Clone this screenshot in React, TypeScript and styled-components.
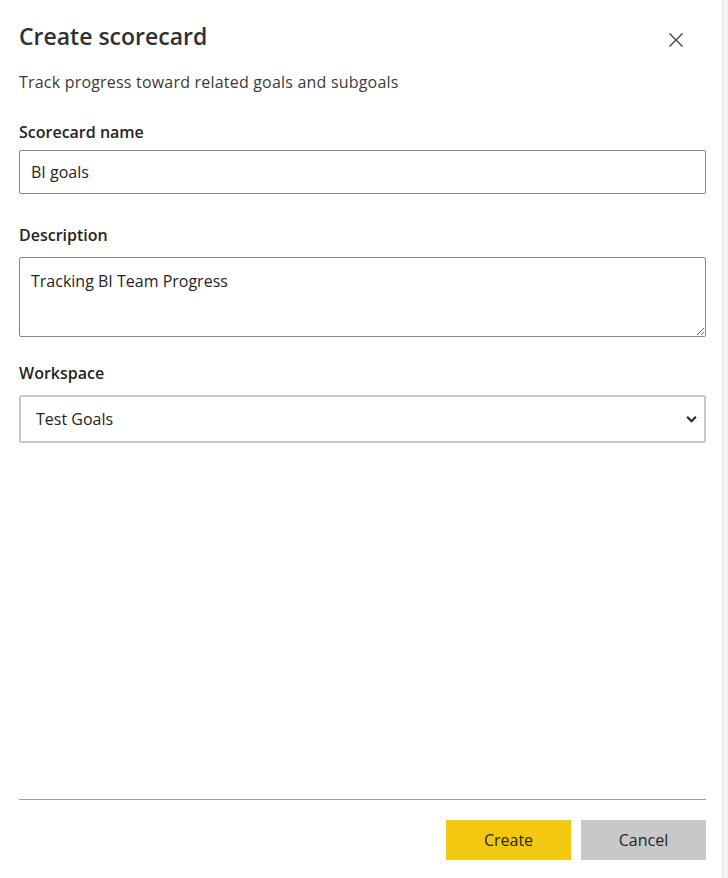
import React from "react";
import styled, { createGlobalStyle } from "styled-components";

const GlobalStyle = createGlobalStyle`
  html, body {
    margin: 0;
    padding: 0;
    background: #ffffff;
  }
  body {
    font-family: "Open Sans", "Liberation Sans", sans-serif;
    color: #252423;
  }
  * {
    box-sizing: border-box;
  }
`;

const Page = styled.div`
  display: flex;
  width: 728px;
  height: 878px;
`;

const Panel = styled.div`
  flex: 1;
  display: flex;
  flex-direction: column;
  padding: 20px 16px 18px 19px;
`;

const ScrollStrip = styled.div`
  width: 6px;
  background: #f3f3f3;
  border-left: 1px solid #e3e3e3;
`;

const Header = styled.div`
  display: flex;
  justify-content: space-between;
  align-items: flex-start;
`;

const Title = styled.h1`
  margin: 0;
  font-size: 23px;
  font-weight: 600;
  line-height: 32px;
  color: #323130;
`;

const CloseButton = styled.button`
  display: flex;
  align-items: center;
  justify-content: center;
  width: 32px;
  height: 32px;
  margin: 4px 14px 0 0;
  padding: 0;
  border: none;
  background: transparent;
  color: #444;
  cursor: pointer;
`;

const Subtitle = styled.p`
  margin: 15px 0 28px;
  font-size: 16px;
  line-height: 22px;
  letter-spacing: 0.2px;
  color: #3b3a39;
`;

const Field = styled.div<{ $top?: number }>`
  display: flex;
  flex-direction: column;
  margin-top: ${(p) => p.$top ?? 0}px;
`;

const Label = styled.label<{ $gap: number }>`
  font-size: 16px;
  font-weight: 600;
  line-height: 22px;
  margin-bottom: ${(p) => p.$gap}px;
  color: #252423;
`;

const TextInput = styled.input`
  width: 100%;
  height: 44px;
  padding: 0 11px;
  border: 1px solid #8a8886;
  border-radius: 2px;
  font-family: inherit;
  font-size: 16px;
  color: #252423;
  outline: none;
`;

const TextArea = styled.textarea`
  width: 100%;
  height: 80px;
  padding: 12px 11px;
  border: 1px solid #8a8886;
  border-radius: 2px;
  font-family: inherit;
  font-size: 16px;
  line-height: 22px;
  color: #252423;
  resize: vertical;
  outline: none;
`;

const SelectWrap = styled.div`
  position: relative;
`;

const Select = styled.select`
  display: block;
  width: 100%;
  height: 48px;
  padding: 0 40px 0 15px;
  border: 2px solid #c8c8c8;
  border-radius: 2px;
  background: #fff;
  font-family: inherit;
  font-size: 16px;
  color: #252423;
  appearance: none;
  outline: none;
`;

const Chevron = styled.span`
  position: absolute;
  right: 8px;
  top: 50%;
  transform: translateY(-50%);
  display: flex;
  pointer-events: none;
  color: #252423;
`;

const Spacer = styled.div`
  flex: 1;
`;

const Footer = styled.div`
  display: flex;
  flex-direction: column;
`;

const Divider = styled.hr`
  margin: 0 0 20px;
  border: none;
  border-top: 1px solid #a19f9d;
`;

const Actions = styled.div`
  display: flex;
  justify-content: flex-end;
  gap: 10px;
`;

const ActionButton = styled.button<{ $primary?: boolean }>`
  width: 125px;
  height: 40px;
  border: none;
  border-radius: 0;
  background: ${(p) => (p.$primary ? "#f2c811" : "#c8c8c8")};
  font-family: inherit;
  font-size: 16px;
  color: #252423;
  cursor: pointer;
`;

export default function App() {
  return (
    <>
      <GlobalStyle />
      <Page>
        <Panel>
          <Header>
            <Title>Create scorecard</Title>
            <CloseButton aria-label="Close">
              <svg width="16" height="16" viewBox="0 0 16 16">
                <path
                  d="M1.5 1.5 L14.5 14.5 M14.5 1.5 L1.5 14.5"
                  stroke="currentColor"
                  strokeWidth="1.4"
                  fill="none"
                />
              </svg>
            </CloseButton>
          </Header>
          <Subtitle>Track progress toward related goals and subgoals</Subtitle>
          <Field>
            <Label $gap={7}>Scorecard name</Label>
            <TextInput defaultValue="BI goals" />
          </Field>
          <Field $top={30}>
            <Label $gap={11}>Description</Label>
            <TextArea defaultValue="Tracking BI Team Progress" />
          </Field>
          <Field $top={25}>
            <Label $gap={11}>Workspace</Label>
            <SelectWrap>
              <Select defaultValue="test">
                <option value="test">Test Goals</option>
              </Select>
              <Chevron>
                <svg width="13" height="13" viewBox="0 0 12 12">
                  <path
                    d="M2 4 L6 8 L10 4"
                    stroke="currentColor"
                    strokeWidth="2"
                    fill="none"
                  />
                </svg>
              </Chevron>
            </SelectWrap>
          </Field>
          <Spacer />
          <Footer>
            <Divider />
            <Actions>
              <ActionButton $primary>Create</ActionButton>
              <ActionButton>Cancel</ActionButton>
            </Actions>
          </Footer>
        </Panel>
        <ScrollStrip />
      </Page>
    </>
  );
}
